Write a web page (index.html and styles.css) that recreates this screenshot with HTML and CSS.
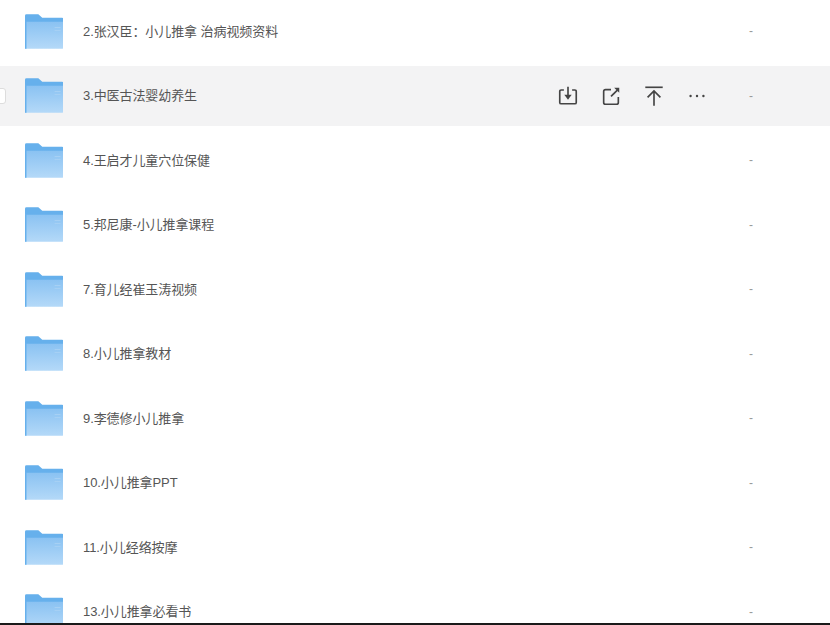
FILE: index.html
```html
<!DOCTYPE html>
<html lang="zh-CN">
  <head>
    <meta charset="UTF-8" />
    <title>文件列表</title>
    <link rel="stylesheet" href="styles.css">
  </head>
  <body>
    <svg class="defs" width="0" height="0">
      <defs>
        <linearGradient id="folderFront" x1="0" y1="0" x2="0" y2="1">
          <stop offset="0" stop-color="#8ac2f2" />
          <stop offset="1" stop-color="#b4d9f8" />
        </linearGradient>
        <symbol id="folder" viewBox="0 0 39 35">
          <path d="M0 1.5Q0 0 1.5 0H13.5L17.500 3.500H37.500Q39 3.500 39 5V12H0Z" fill="#66b0ec" />
          <path d="M0 7.500H39V33.500Q39 35 37.500 35H0Z" fill="url(#folderFront)" />
          <path d="M0 7H1.500V35H0Z" fill="#66b0ec" />
          <path d="M30 13H36V14H30ZM30 16H36V17H30Z" fill="#a6d0f4" />
        </symbol>
      </defs>
    </svg>

    <div class="list">
      <div class="row">
        <svg class="folder"><use href="#folder" /></svg>
        <span class="name">2.张汉臣：小儿推拿 治病视频资料</span>
        <span class="size">-</span>
      </div>
      <div class="row active">
        <span class="check"></span>
        <svg class="folder"><use href="#folder" /></svg>
        <span class="name">3.中医古法婴幼养生</span>
        <div class="actions">
          <svg class="icon" viewBox="0 0 24 24">
            <path d="M7.500 5.500H4.500Q3 5.500 3 7V19Q3 20.500 4.500 20.500H19.500Q21 20.500 21 19V7Q21 5.500 19.500 5.500H16.500" />
            <path d="M12 2V12" />
            <path class="fill" d="M8 10.500H16L12 16Z" />
          </svg>
          <svg class="icon" viewBox="0 0 24 24">
            <path d="M12 5H6Q4 5 4 7V19Q4 21 6 21H18Q20 21 20 19V13" />
            <path d="M12 12.500L19 5.500" />
            <path class="fill" d="M15.500 3H21V8.500Z" />
          </svg>
          <svg class="icon" viewBox="0 0 24 24">
            <path d="M2.500 2.500H21.500" />
            <path d="M12 6.500V22.500M5 13.500L12 6.500L19 13.500" />
          </svg>
          <svg class="icon" viewBox="0 0 24 24">
            <circle class="fill" cx="5" cy="12" r="1.300" />
            <circle class="fill" cx="12" cy="12" r="1.300" />
            <circle class="fill" cx="19" cy="12" r="1.300" />
          </svg>
        </div>
        <span class="size">-</span>
      </div>
      <div class="row">
        <svg class="folder"><use href="#folder" /></svg>
        <span class="name">4.王启才儿童穴位保健</span>
        <span class="size">-</span>
      </div>
      <div class="row">
        <svg class="folder"><use href="#folder" /></svg>
        <span class="name">5.邦尼康-小儿推拿课程</span>
        <span class="size">-</span>
      </div>
      <div class="row">
        <svg class="folder"><use href="#folder" /></svg>
        <span class="name">7.育儿经崔玉涛视频</span>
        <span class="size">-</span>
      </div>
      <div class="row">
        <svg class="folder"><use href="#folder" /></svg>
        <span class="name">8.小儿推拿教材</span>
        <span class="size">-</span>
      </div>
      <div class="row">
        <svg class="folder"><use href="#folder" /></svg>
        <span class="name">9.李德修小儿推拿</span>
        <span class="size">-</span>
      </div>
      <div class="row">
        <svg class="folder"><use href="#folder" /></svg>
        <span class="name">10.小儿推拿PPT</span>
        <span class="size">-</span>
      </div>
      <div class="row">
        <svg class="folder"><use href="#folder" /></svg>
        <span class="name">11.小儿经络按摩</span>
        <span class="size">-</span>
      </div>
      <div class="row">
        <svg class="folder"><use href="#folder" /></svg>
        <span class="name">13.小儿推拿必看书</span>
        <span class="size">-</span>
      </div>
    </div>
    <div class="bottom-line"></div>
  </body>
</html>
```

FILE: styles.css
```css
html,
body {
  height: 100%;
}

body {
  margin: 0;
  overflow: hidden;
  display: flex;
  flex-direction: column;
  background: #fff;
  color: #555;
  font-family: "Liberation Sans", "Noto Sans CJK SC", sans-serif;
  font-size: 13px;
}

.defs {
  position: absolute;
}

.list {
  flex: 1;
  min-height: 0;
  overflow: hidden;
  display: flex;
  flex-direction: column;
  gap: 4.5px;
  padding-top: 1.25px;
}

.row {
  flex: none;
  position: relative;
  height: 60px;
  display: flex;
  align-items: center;
  padding-left: 24.5px;
}

.row.active {
  background: #f3f3f4;
}

.folder {
  flex: none;
  width: 38.5px;
  height: 35px;
}

.name {
  flex: 1;
  margin-left: 20px;
  padding-bottom: 2px;
  letter-spacing: -0.08px;
  white-space: nowrap;
}

.size {
  flex: none;
  width: 81px;
  margin-left: 39px;
  color: #999;
  font-size: 12px;
}

.check {
  position: absolute;
  left: -10px;
  top: 22px;
  width: 14px;
  height: 14px;
  background: #fff;
  border: 1px solid #ddd;
  border-radius: 3px;
}

.actions {
  display: flex;
  gap: 21px;
  margin-right: 2px;
}

.icon {
  width: 22px;
  height: 22px;
  fill: none;
  stroke: #444;
  stroke-width: 1.8;
}

.icon .fill {
  fill: #444;
  stroke: none;
}

.bottom-line {
  flex: none;
  height: 2px;
  background: #1a1a1a;
}
```
